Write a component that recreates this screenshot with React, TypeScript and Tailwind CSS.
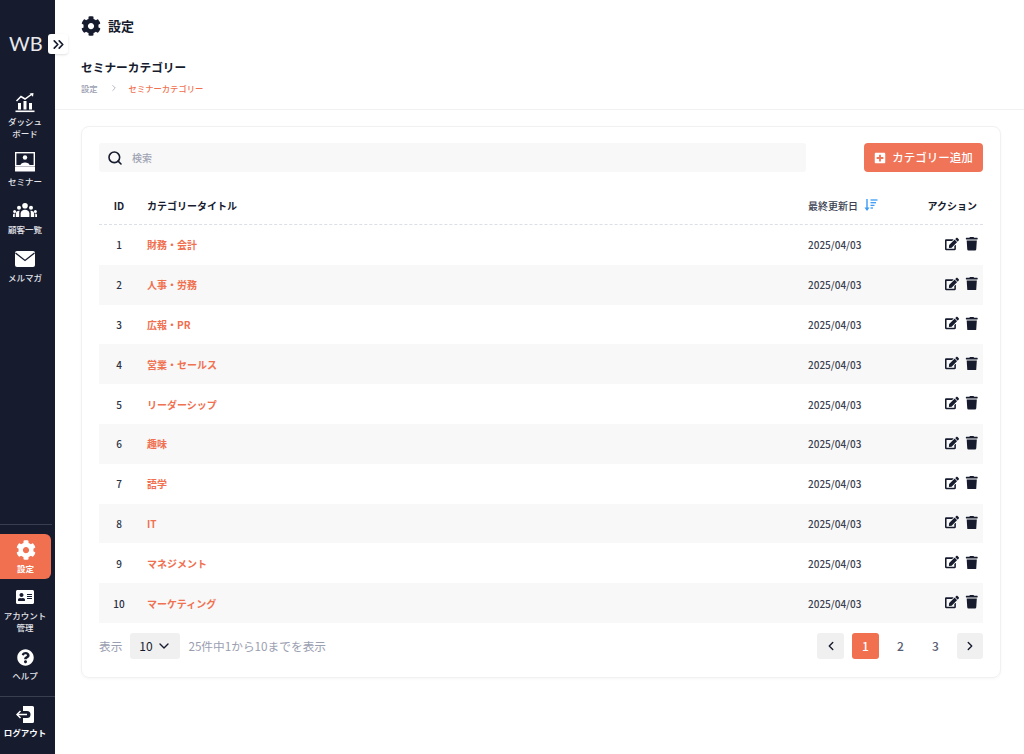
import { ChevronLeft, ChevronRight, ChevronDown, ChevronsRight, Search } from 'lucide-react'
import { FaAddressCard, FaCog, FaEdit, FaPlusSquare, FaQuestionCircle, FaTrash } from 'react-icons/fa'

const rows = [
  { id: 1, title: '財務・会計' },
  { id: 2, title: '人事・労務' },
  { id: 3, title: '広報・PR' },
  { id: 4, title: '営業・セールス' },
  { id: 5, title: 'リーダーシップ' },
  { id: 6, title: '趣味' },
  { id: 7, title: '語学' },
  { id: 8, title: 'IT' },
  { id: 9, title: 'マネジメント' },
  { id: 10, title: 'マーケティング' },
]

function ChartIcon() {
  return (
    <svg width="20" height="20" viewBox="0 0 20 20" fill="none">
      <rect x="3" y="10" width="3" height="6.5" fill="#fff" />
      <rect x="8.5" y="8" width="3" height="8.5" fill="#fff" />
      <rect x="14" y="10" width="3" height="6.5" fill="#fff" />
      <rect x="0.5" y="17.5" width="19" height="1.6" fill="#fff" />
      <path d="M1.5 8 L6 3.5 L10 6 L17 1" stroke="#fff" strokeWidth="1.5" />
      <path d="M14.5 0.5 L18.5 0 L18 3.8 Z" fill="#fff" />
    </svg>
  )
}

function SeminarIcon() {
  return (
    <svg width="20" height="20" viewBox="0 0 20 20" fill="none">
      <rect x="0.7" y="0.7" width="18.6" height="13" stroke="#fff" strokeWidth="1.4" />
      <circle cx="10" cy="5.5" r="2.2" fill="#fff" />
      <path d="M5.5 13 C5.5 9.5 14.5 9.5 14.5 13 Z" fill="#fff" />
      <rect x="0" y="14.5" width="20" height="5" rx="0.6" fill="#fff" />
    </svg>
  )
}

function UsersIcon() {
  return (
    <svg width="24" height="15" viewBox="0 0 24 15" fill="#fff">
      <circle cx="12" cy="2.8" r="2.8" />
      <path d="M7.6 14 V10.5 C7.6 5.6 16.4 5.6 16.4 10.5 V14 Z" />
      <circle cx="6" cy="4.8" r="2" />
      <path d="M2.8 14 V11 C2.8 8.3 5 7.4 6.8 7.8 C6.2 8.6 6.2 9.5 6.2 10.5 V14 Z" />
      <circle cx="18" cy="4.8" r="2" />
      <path d="M21.2 14 V11 C21.2 8.3 19 7.4 17.2 7.8 C17.8 8.6 17.8 9.5 17.8 10.5 V14 Z" />
      <circle cx="1.6" cy="8.4" r="1.5" />
      <path d="M0 14 V12 C0 10.8 1 10.6 1.8 10.6 V14 Z" />
      <circle cx="22.4" cy="8.4" r="1.5" />
      <path d="M24 14 V12 C24 10.8 23 10.6 22.2 10.6 V14 Z" />
    </svg>
  )
}

function MailIcon() {
  return (
    <svg width="20" height="16" viewBox="0 0 20 16" fill="none">
      <rect x="0" y="0" width="20" height="16" rx="2" fill="#fff" />
      <path d="M0.5 2 L10 9.5 L19.5 2" stroke="#161b2e" strokeWidth="1.3" />
    </svg>
  )
}

function LogoutIcon() {
  return (
    <svg width="18" height="17" viewBox="0 0 18 17" fill="none">
      <path d="M7 0 H16.5 A1.5 1.5 0 0 1 18 1.5 V15.5 A1.5 1.5 0 0 1 16.5 17 H7 V12 H11 A3.5 3.5 0 0 0 11 5 H7 Z" fill="#fff" />
      <path d="M1 8.5 H11" stroke="#fff" strokeWidth="1.5" />
      <path d="M4.5 5 L1 8.5 L4.5 12" stroke="#fff" strokeWidth="1.5" />
    </svg>
  )
}

function SortIcon() {
  return (
    <svg width="14" height="13" viewBox="0 0 14 13" fill="none">
      <path d="M3 0 V11" stroke="#3b9bf5" strokeWidth="1.4" />
      <path d="M0.5 8.5 L3 12 L5.5 8.5 Z" fill="#3b9bf5" />
      <path d="M6.5 1 H13.5" stroke="#3b9bf5" strokeWidth="1.3" />
      <path d="M6.5 3.7 H12" stroke="#3b9bf5" strokeWidth="1.3" />
      <path d="M6.5 6.4 H10.5" stroke="#3b9bf5" strokeWidth="1.3" />
      <path d="M6.5 9 H9" stroke="#3b9bf5" strokeWidth="1.3" />
    </svg>
  )
}

function NavItem({ icon, label, className }: { icon: React.ReactNode; label: React.ReactNode; className: string }) {
  return (
    <div className={`flex flex-col items-center pr-[5px] text-white ${className}`}>
      <div className="flex h-[20px] items-center justify-center">{icon}</div>
      <div className="text-center text-[8.5px] font-medium leading-[11.5px] whitespace-nowrap text-[#e4e5ea]">{label}</div>
    </div>
  )
}

export default function App() {
  return (
    <div className="flex h-[754px] w-[1024px] overflow-hidden bg-white font-['Noto_Sans_CJK_JP','Noto_Sans',sans-serif] text-[#161b2e]">
      {/* sidebar */}
      <aside className="relative flex w-[55px] shrink-0 flex-col bg-[#161b2e]">
        <div className="pt-[31px] pl-[9px] font-['Lato',sans-serif] text-[20px] font-normal leading-[25px] text-[#e8e9ed]">WB</div>
        <div className="absolute top-[34px] left-[48px] flex h-[20px] w-[20px] items-center justify-center rounded-[3px] bg-white shadow-sm">
          <ChevronsRight size={17} strokeWidth={2.4} color="#161b2e" />
        </div>

        <NavItem className="mt-[37px] gap-[3px]" icon={<ChartIcon />} label={<>ダッシュ<br />ボード</>} />
        <NavItem className="mt-[13px] gap-[4px]" icon={<SeminarIcon />} label="セミナー" />
        <NavItem className="mt-[13px] gap-[3px]" icon={<UsersIcon />} label="顧客一覧" />
        <NavItem className="mt-[14px] gap-[3px]" icon={<MailIcon />} label="メルマガ" />

        <div className="mt-auto mr-[3px] border-t border-[#3a3f50]" />
        <div className="mt-[9px] mr-[4px] flex h-[45px] flex-col items-center justify-center rounded-r-[6px] bg-[#f07050] text-white">
          <FaCog size={20} />
          <div className="mt-[3px] text-[8.5px] font-bold leading-[11px]">設定</div>
        </div>
        <NavItem className="mt-[8px] gap-[3px]" icon={<FaAddressCard size={18} />} label={<>アカウント<br />管理</>} />
        <NavItem className="mt-[14px] gap-[3px]" icon={<FaQuestionCircle size={17} />} label="ヘルプ" />
        <div className="mt-[14px] border-t border-[#3a3f50]" />
        <NavItem className="mt-[8px] mb-[16px] gap-[2px]" icon={<LogoutIcon />} label={<span className="font-bold text-white">ログアウト</span>} />
      </aside>

      <main className="flex min-w-0 flex-1 flex-col">
        {/* header */}
        <header className="h-[110px] border-b border-[#f1f1f3] pl-[26px] pt-[15px]">
          <div className="flex h-[22px] items-center gap-[7px]">
            <FaCog size={20} />
            <span className="text-[13px] font-bold">設定</span>
          </div>
          <div className="mt-[21px] text-[11.7px] font-bold leading-[18px]">セミナーカテゴリー</div>
          <div className="mt-[5px] flex items-center text-[8.3px] leading-[14px]">
            <span className="font-medium text-[#9a9eb0]">設定</span>
            <ChevronRight size={10} color="#a5a8b8" className="ml-[11px]" />
            <span className="ml-[10px] font-medium text-[#f07050]">セミナーカテゴリー</span>
          </div>
        </header>

        {/* card */}
        <section className="mt-[16px] ml-[26px] h-[552px] w-[920px] rounded-[8px] border border-[#f1f1f3] px-[17px] pt-[16px] shadow-[0_1px_3px_rgba(0,0,0,0.04)]">
          <div className="flex items-start justify-between">
            <div className="flex h-[29px] w-[707px] items-center rounded-[3px] bg-[#f8f8f8] pl-[8px]">
              <Search size={16} strokeWidth={2.4} color="#161b2e" />
              <span className="ml-[9px] text-[10px] font-medium text-[#a0a3b3]">検索</span>
            </div>
            <div className="flex h-[29px] w-[119px] items-center justify-center gap-[6px] rounded-[4px] bg-[#f07458] text-white">
              <FaPlusSquare size={12} />
              <span className="text-[11.5px] font-medium">カテゴリー追加</span>
            </div>
          </div>

          {/* table */}
          <div className="mt-[13px] flex h-[40px] items-center border-b border-dashed border-[#dddfe8] pt-[2px] text-[10px] font-bold">
            <div className="w-[48px] pr-[8px] text-center">ID</div>
            <div className="flex-1">カテゴリータイトル</div>
            <div className="flex w-[99px] items-center gap-[6px] font-medium text-[#3a3e50]">
              最終更新日
              <SortIcon />
            </div>
            <div className="w-[76px] pr-[6px] text-right">アクション</div>
          </div>
          {rows.map((row) => (
            <div key={row.id} className="flex h-[39.8px] items-center text-[10px] even:bg-[#f8f8f8]">
              <div className="w-[48px] pr-[8px] text-center font-medium text-[#2b3042]">{row.id}</div>
              <div className="flex-1 font-bold text-[#f07050]">{row.title}</div>
              <div className="w-[99px] font-medium text-[#3a3e50]">2025/04/03</div>
              <div className="mb-[2px] flex w-[76px] items-center justify-end gap-[6px] pr-[5px]">
                <FaEdit size={14} />
                <FaTrash size={13.5} />
              </div>
            </div>
          ))}

          {/* pagination */}
          <div className="mt-[10px] flex items-center justify-between">
            <div className="flex items-center text-[11.7px] text-[#9a9eb0]">
              <span>表示</span>
              <div className="ml-[8px] flex h-[26px] w-[50px] items-center justify-center gap-[3px] rounded-[3px] bg-[#f0f0f0] text-[12px] text-[#161b2e]">
                10
                <ChevronDown size={16} strokeWidth={2} />
              </div>
              <span className="ml-[8px]">25件中1から10までを表示</span>
            </div>
            <div className="flex items-center text-[12px] font-medium text-[#5a5e72]">
              <div className="flex h-[26px] w-[27px] items-center justify-center rounded-[3px] bg-[#f0f0f0] text-[#161b2e]">
                <ChevronLeft size={14} strokeWidth={2.4} />
              </div>
              <div className="ml-[8px] flex h-[26px] w-[27px] items-center justify-center rounded-[3px] bg-[#f07050] text-white">1</div>
              <div className="ml-[8px] flex h-[26px] w-[27px] items-center justify-center">2</div>
              <div className="ml-[8px] flex h-[26px] w-[27px] items-center justify-center">3</div>
              <div className="ml-[8px] flex h-[26px] w-[26px] items-center justify-center rounded-[3px] bg-[#f0f0f0] text-[#161b2e]">
                <ChevronRight size={14} strokeWidth={2.4} />
              </div>
            </div>
          </div>
        </section>
      </main>
    </div>
  )
}
